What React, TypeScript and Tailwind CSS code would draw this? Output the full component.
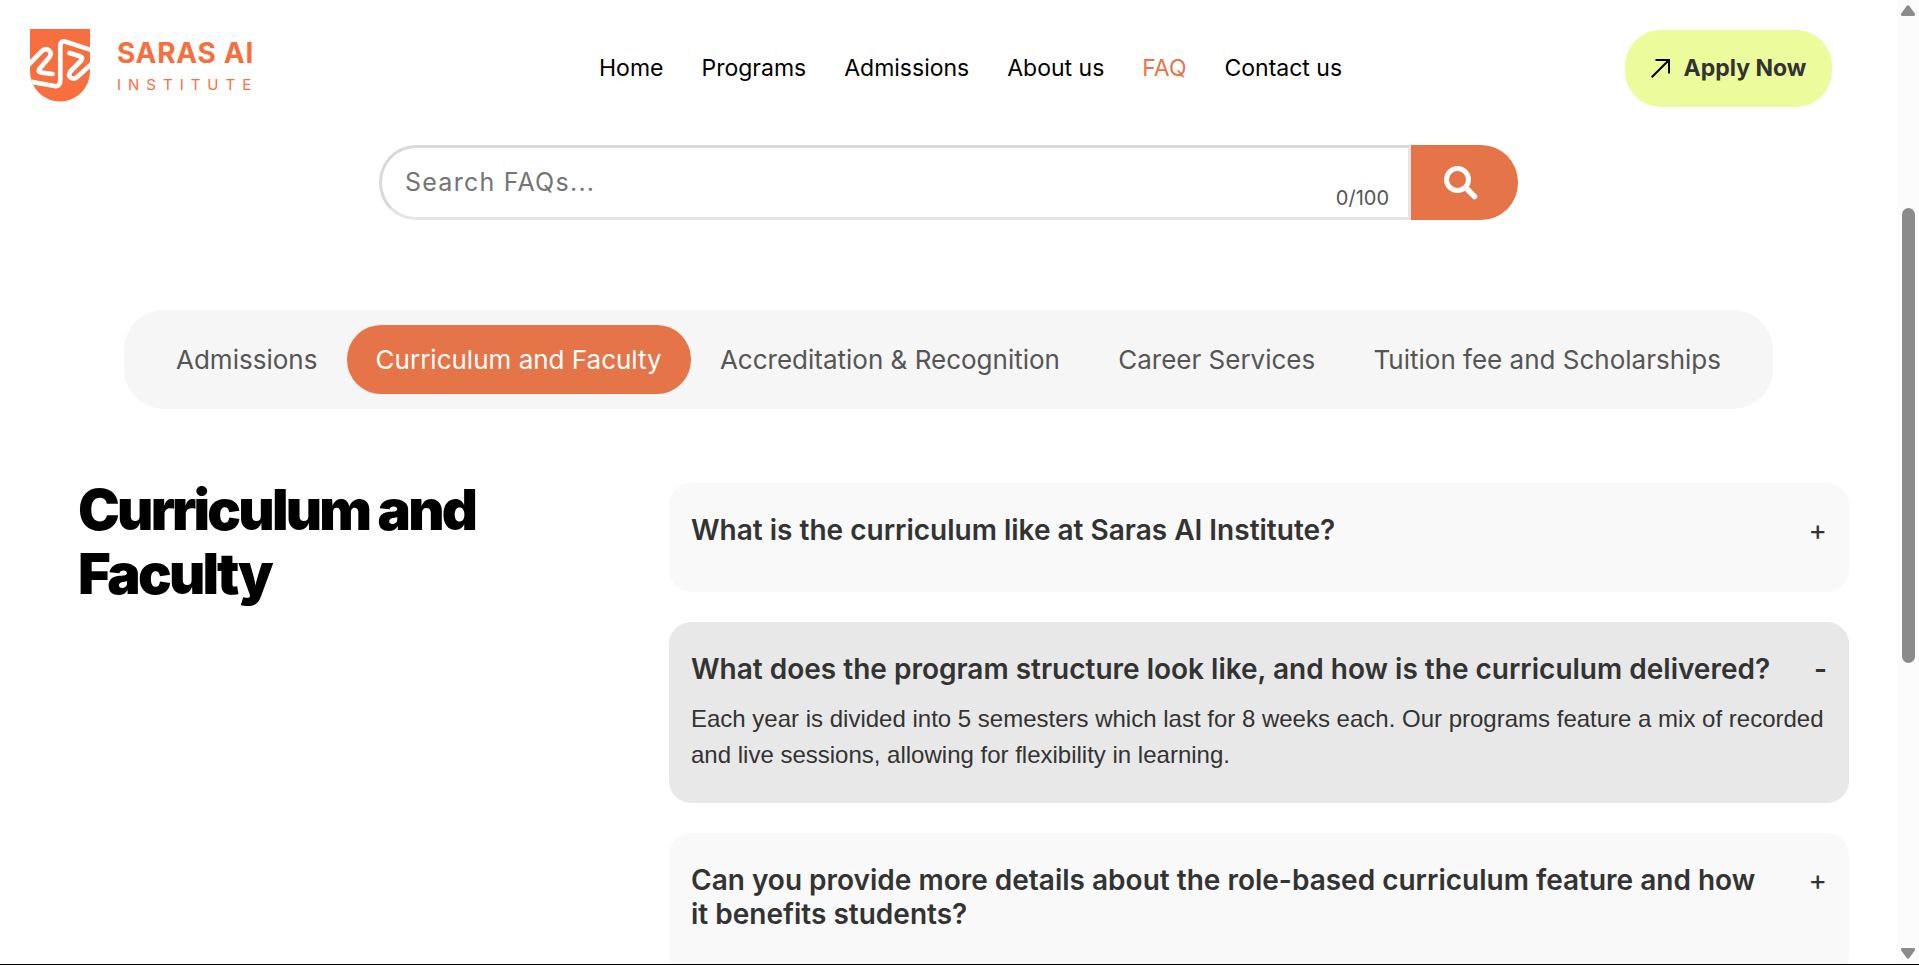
import { useState } from "react";

const navItems = ["Home", "Programs", "Admissions", "About us", "FAQ", "Contact us"];

const tabs = [
  "Admissions",
  "Curriculum and Faculty",
  "Accreditation & Recognition",
  "Career Services",
  "Tuition fee and Scholarships",
];

const faqs = [
  {
    question: "What is the curriculum like at Saras AI Institute?",
    answer: "",
  },
  {
    question: "What does the program structure look like, and how is the curriculum delivered?",
    answer:
      "Each year is divided into 5 semesters which last for 8 weeks each. Our programs feature a mix of recorded and live sessions, allowing for flexibility in learning.",
  },
  {
    question:
      "Can you provide more details about the role-based curriculum feature and how it benefits students?",
    answer: "",
  },
];

function Logo() {
  return (
    <a href="#home" aria-label="Saras AI Institute" className="flex items-center gap-[27px] text-[#f76f3e]">
      <svg width="60" height="73" viewBox="0 0 60 73" aria-hidden="true">
        <defs>
          <clipPath id="shield">
            <path d="M0 0H60V42.5A30 30 0 0 1 0 42.5Z" />
          </clipPath>
        </defs>
        <g clipPath="url(#shield)">
          <rect width="60" height="73" fill="#f76f3e" />
          <g fill="none" stroke="#fff" strokeWidth="4.7" strokeLinecap="round" strokeLinejoin="round">
            <path d="M62 21.3L36.5 12.9Q30.3 11 30.3 17V51.5Q30.3 58 24.5 57L0 52.6" />
            <path d="M-2 36.5L11.5 22.4Q15.500 18.500 19.300 21.600Q22.300 24.800 19.300 28.200L9.800 39.500Q7.200 43 11.500 43.700L22.500 45" />
            <path d="M39.500 24L50 27.200Q53.500 28.600 51.200 31.500L40.500 42.500Q37.800 46 40.500 48.500Q43.800 51 47.200 48L62 34.500" />
          </g>
        </g>
      </svg>
      <span className="flex flex-col gap-1.5">
        <span className="text-[28px] leading-8 font-bold tracking-wide">SARAS AI</span>
        <span className="text-[15px] leading-5 font-normal tracking-[7px]">INSTITUTE</span>
      </span>
    </a>
  );
}

function Header() {
  return (
    <header className="flex items-center pt-[29px] pr-[65px] pl-[30px]">
      <div className="w-[569px] self-start">
        <Logo />
      </div>
      <nav className="flex gap-[38px] text-[23px] leading-8 text-black">
        {navItems.map((item) => (
          <a key={item} href="#nav" className={item === "FAQ" ? "text-[#e57548]" : "text-black"}>
            {item}
          </a>
        ))}
      </nav>
      <a
        href="#apply"
        className="mt-px ml-auto flex h-[77px] w-[207px] items-center justify-center gap-3.5 rounded-[36px] bg-[#ecfb9b] text-[23px] font-bold text-[#333]"
      >
        <svg width="19" height="19" viewBox="0 0 19 19" fill="none" stroke="#000" strokeWidth="2" aria-hidden="true">
          <path d="M0.700 18.300L17.500 1.500M4.500 1H18V14.500" />
        </svg>
        Apply Now
      </a>
    </header>
  );
}

function Search() {
  const [query, setQuery] = useState("");
  return (
    <form className="mx-auto mt-[38px] flex h-[75px] w-full max-w-[1139px]" onSubmit={(e) => e.preventDefault()}>
      <div className="flex flex-1 items-end rounded-l-[37px] border-3 border-t-[#d9d9d9] border-r-[#e5e5e5] border-b-[#e5e5e5] border-l-[#d9d9d9] bg-white pr-[19px]">
        <input
          type="text"
          aria-label="Search FAQs"
          placeholder="Search FAQs..."
          maxLength={100}
          value={query}
          onChange={(e) => setQuery(e.target.value)}
          className="h-full flex-1 bg-transparent pb-0.5 pl-[23px] text-[25px] tracking-wider text-[#333] outline-none placeholder:text-[#757575]"
        />
        <span className="pb-[5px] text-xl text-[#555]">{query.length}/100</span>
      </div>
      <button
        type="submit"
        aria-label="Search"
        className="flex w-[107px] items-center rounded-r-[37px] bg-[#e57548] pl-[33px]"
      >
        <svg width="34" height="34" viewBox="0 0 34 34" fill="none" stroke="#fff" aria-hidden="true">
          <circle cx="13.500" cy="13.500" r="11" strokeWidth="5" />
          <path d="M22.500 22.500L30.500 30.500" strokeWidth="5.500" strokeLinecap="round" />
        </svg>
      </button>
    </form>
  );
}

function Tabs() {
  return (
    <div role="tablist" className="mx-[124px] mt-[90px] flex justify-between rounded-[40px] bg-[#f6f6f6] px-[23px] py-[15px]">
      {tabs.map((tab) => {
        const active = tab === "Curriculum and Faculty";
        return (
          <button
            key={tab}
            type="button"
            role="tab"
            aria-selected={active}
            className={
              active
                ? "h-[69px] rounded-[34px] bg-[#e57548] px-[29px] text-[26px] whitespace-nowrap text-white"
                : "h-[69px] rounded-[34px] px-[29px] text-[26px] whitespace-nowrap text-[#555]"
            }
          >
            {tab}
          </button>
        );
      })}
    </div>
  );
}

function Faq({ question, answer }: { question: string; answer: string }) {
  const open = answer !== "";
  return (
    <section className={open ? "rounded-[22px] bg-[#e8e8e8] px-[22px] py-[30px]" : "rounded-[22px] bg-[#f9f9f9] px-[22px] py-[30px]"}>
      <h3 className="mb-[15px]">
        <button
          type="button"
          aria-expanded={open}
          className="flex w-full items-start justify-between gap-10 text-left text-[28px] leading-[34px] font-semibold text-[#333]"
        >
          <span>{question}</span>
          <span className={open ? "font-semibold" : "font-normal"}>{open ? "-" : "+"}</span>
        </button>
      </h3>
      {open && <p className="font-['Liberation_Sans',Arial,sans-serif] text-2xl leading-9 text-[#333]">{answer}</p>}
    </section>
  );
}

function Scrollbar() {
  return (
    <div aria-hidden="true" className="flex w-[22px] shrink-0 flex-col items-center justify-between bg-[#fcfcfc] py-[5px]">
      <svg width="16" height="12" viewBox="0 0 16 12" fill="#8b8b8b">
        <path d="M6.500 1.200Q8 -0.600 9.500 1.200L14.800 8.500Q15.800 11 13.500 11H2.500Q0.200 11 1.200 8.500Z" />
      </svg>
      <div className="mb-[94px] h-[455px] w-[13px] rounded-full bg-[#8b8b8b]" />
      <svg width="16" height="12" viewBox="0 0 16 12" fill="#8b8b8b">
        <path d="M6.500 10.800Q8 12.600 9.500 10.800L14.800 3.500Q15.800 1 13.500 1H2.500Q0.200 1 1.200 3.500Z" />
      </svg>
    </div>
  );
}

export default function App() {
  return (
    <div className="flex h-screen overflow-hidden border-b border-black bg-white font-[Inter,sans-serif]">
      <div className="min-w-0 flex-1">
        <Header />
        <Search />
        <Tabs />
        <main className="mt-[69px] flex justify-between pr-12 pl-[78px]">
          <h1 className="w-[440px] text-[56px] leading-[64px] font-black tracking-tighter text-black">
            Curriculum and Faculty
          </h1>
          <div className="flex w-[1180px] flex-col gap-[30px] pt-[5px]">
            {faqs.map((faq) => (
              <Faq key={faq.question} {...faq} />
            ))}
          </div>
        </main>
      </div>
      <Scrollbar />
    </div>
  );
}
